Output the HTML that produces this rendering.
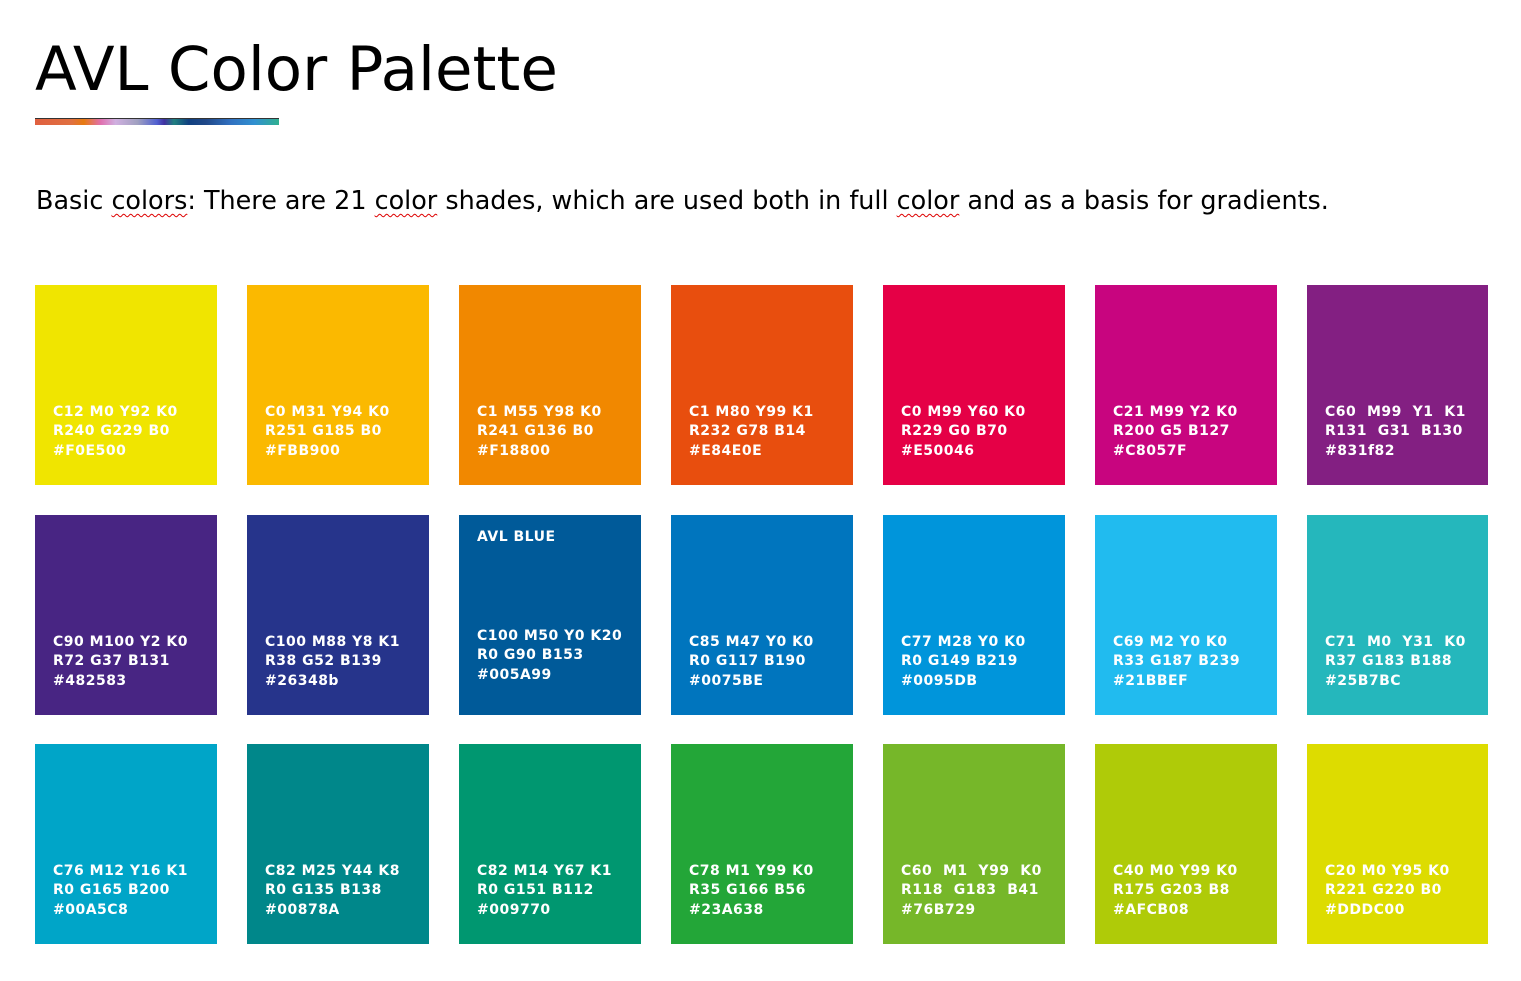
<!DOCTYPE html>
<html><head><meta charset="utf-8"><style>
body{margin:0;background:#fff;width:1521px;height:981px;overflow:hidden;position:relative;font-family:"DejaVu Sans","Liberation Sans",sans-serif}
h1{position:absolute;left:35px;top:30px;margin:0;font-weight:normal;font-size:61px;line-height:80px;color:#000}
.bar{position:absolute;left:35px;top:118px;width:244px;height:6px;background:linear-gradient(90deg,#e06040 0%,#e07040 15%,#e77a10 20%,#e070b0 27%,#d0b0e0 33%,#a0a0c0 42%,#5060d0 50%,#4030a0 53%,#208080 57%,#104080 63%,#204888 70%,#3070c0 80%,#3090d0 90%,#30b090 100%);border-top:1px solid #333}
p{position:absolute;left:36px;top:184px;margin:0;font-size:25.45px;line-height:34px;color:#000;white-space:nowrap}
.u{text-decoration:underline wavy #d00;text-decoration-thickness:1px;text-underline-offset:4px}
.s{position:absolute;width:182px;height:200px}
.t{position:absolute;left:18px;bottom:24px;color:#fff;font-weight:bold;font-size:14px;letter-spacing:0.5px;line-height:19.5px;white-space:nowrap}
.top{position:absolute;left:18px;top:14px;color:#fff;font-weight:bold;font-size:14px;letter-spacing:0.5px}
</style></head><body>
<h1>AVL Color Palette</h1>
<div class="bar"></div>
<p>Basic <span class="u">colors</span>: There are 21 <span class="u">color</span> shades, which are used both in full <span class="u">color</span> and as a basis for gradients.</p>

<div class="s" style="left:35px;top:285px;background:#F0E500"><div class="t">C12 M0 Y92 K0<br>R240 G229 B0<br>#F0E500</div></div>
<div class="s" style="left:247px;top:285px;background:#FBB900"><div class="t">C0 M31 Y94 K0<br>R251 G185 B0<br>#FBB900</div></div>
<div class="s" style="left:459px;top:285px;background:#F18800"><div class="t">C1 M55 Y98 K0<br>R241 G136 B0<br>#F18800</div></div>
<div class="s" style="left:671px;top:285px;background:#E84E0E"><div class="t">C1 M80 Y99 K1<br>R232 G78 B14<br>#E84E0E</div></div>
<div class="s" style="left:883px;top:285px;background:#E50046"><div class="t">C0 M99 Y60 K0<br>R229 G0 B70<br>#E50046</div></div>
<div class="s" style="left:1095px;top:285px;background:#C8057F"><div class="t">C21 M99 Y2 K0<br>R200 G5 B127<br>#C8057F</div></div>
<div class="s" style="left:1307px;top:285px;background:#831f82;width:181px"><div class="t">C60 &nbsp;M99 &nbsp;Y1 &nbsp;K1<br>R131 &nbsp;G31 &nbsp;B130<br>#831f82</div></div>

<div class="s" style="left:35px;top:515px;background:#482583"><div class="t">C90 M100 Y2 K0<br>R72 G37 B131<br>#482583</div></div>
<div class="s" style="left:247px;top:515px;background:#26348b"><div class="t">C100 M88 Y8 K1<br>R38 G52 B139<br>#26348b</div></div>
<div class="s" style="left:459px;top:515px;background:#005A99"><div class="top">AVL BLUE</div><div class="t" style="bottom:30px">C100 M50 Y0 K20<br>R0 G90 B153<br>#005A99</div></div>
<div class="s" style="left:671px;top:515px;background:#0075BE"><div class="t">C85 M47 Y0 K0<br>R0 G117 B190<br>#0075BE</div></div>
<div class="s" style="left:883px;top:515px;background:#0095DB"><div class="t">C77 M28 Y0 K0<br>R0 G149 B219<br>#0095DB</div></div>
<div class="s" style="left:1095px;top:515px;background:#21BBEF"><div class="t">C69 M2 Y0 K0<br>R33 G187 B239<br>#21BBEF</div></div>
<div class="s" style="left:1307px;top:515px;background:#25B7BC;width:181px"><div class="t">C71 &nbsp;M0 &nbsp;Y31 &nbsp;K0<br>R37 G183 B188<br>#25B7BC</div></div>

<div class="s" style="left:35px;top:744px;background:#00A5C8"><div class="t">C76 M12 Y16 K1<br>R0 G165 B200<br>#00A5C8</div></div>
<div class="s" style="left:247px;top:744px;background:#00878A"><div class="t">C82 M25 Y44 K8<br>R0 G135 B138<br>#00878A</div></div>
<div class="s" style="left:459px;top:744px;background:#009770"><div class="t">C82 M14 Y67 K1<br>R0 G151 B112<br>#009770</div></div>
<div class="s" style="left:671px;top:744px;background:#23A638"><div class="t">C78 M1 Y99 K0<br>R35 G166 B56<br>#23A638</div></div>
<div class="s" style="left:883px;top:744px;background:#76B729"><div class="t">C60 &nbsp;M1 &nbsp;Y99 &nbsp;K0<br>R118 &nbsp;G183 &nbsp;B41<br>#76B729</div></div>
<div class="s" style="left:1095px;top:744px;background:#AFCB08"><div class="t">C40 M0 Y99 K0<br>R175 G203 B8<br>#AFCB08</div></div>
<div class="s" style="left:1307px;top:744px;background:#DDDC00;width:181px"><div class="t">C20 M0 Y95 K0<br>R221 G220 B0<br>#DDDC00</div></div>
</body></html>
